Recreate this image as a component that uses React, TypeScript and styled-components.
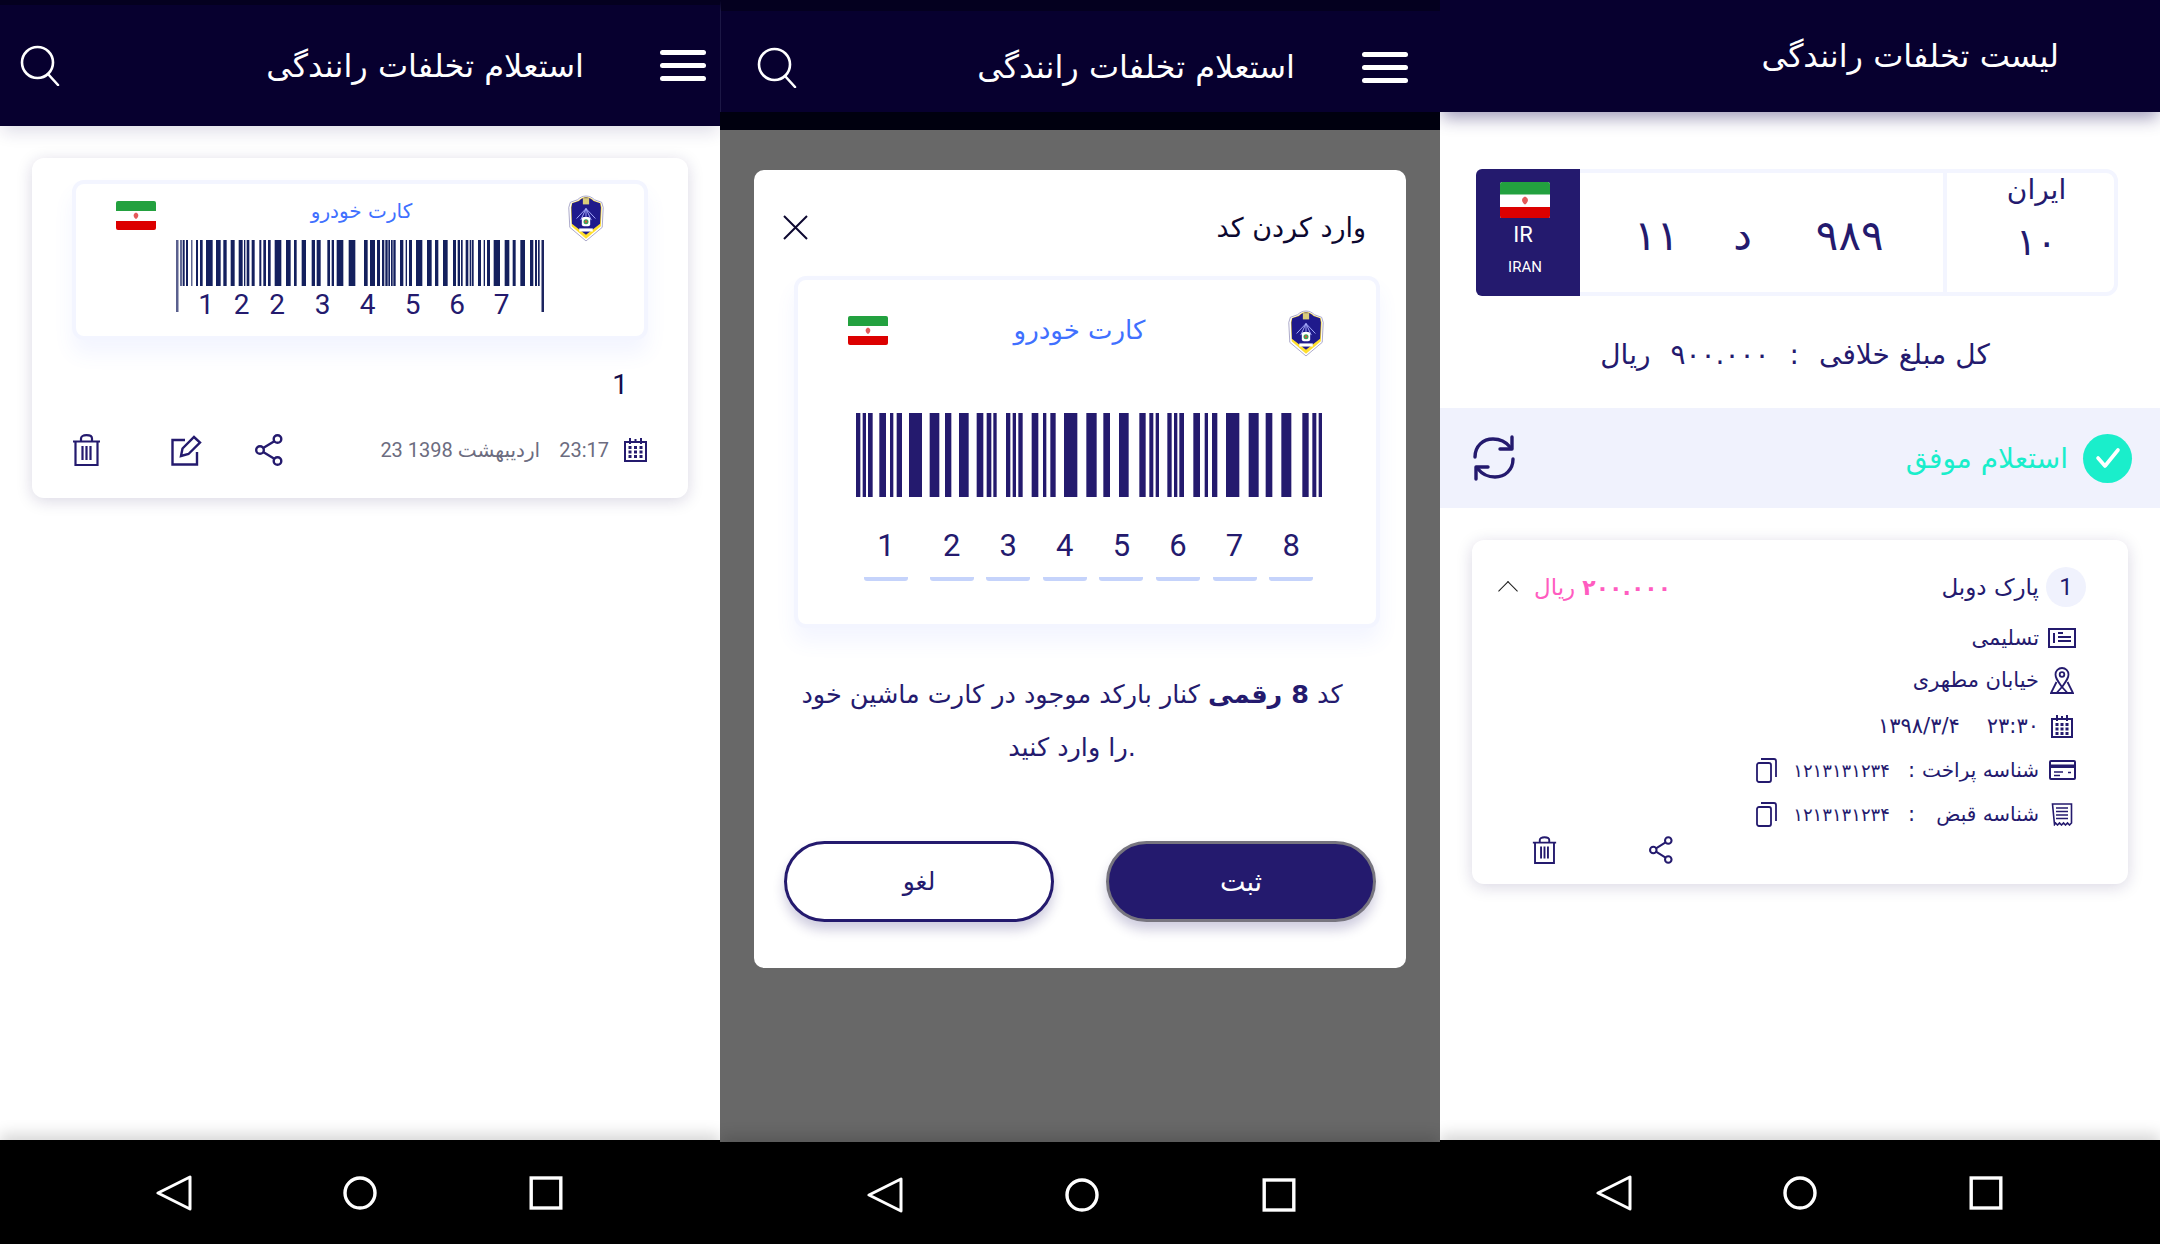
import React from 'react'
import styled, { createGlobalStyle } from 'styled-components'

const INDIGO = '#241a6e'
const NIGHT = '#07002f'
const ARABIC = '"DejaVu Sans", sans-serif'
const LATIN = 'Roboto, "DejaVu Sans", sans-serif'

const GlobalStyle = createGlobalStyle`
  html, body { margin: 0; padding: 0; background: #fff; }
  * { box-sizing: border-box; }
  body { font-family: ${ARABIC}; color: ${INDIGO}; }
`

const Page = styled.div`
  display: grid;
  grid-template-columns: repeat(3, 720px);
  width: 2160px;
  height: 1244px;
  overflow: hidden;
`

const Phone = styled.div`
  display: flex;
  flex-direction: column;
  height: 1244px;
  overflow: hidden;
`

const Drawing = styled.svg`
  flex: none;
  display: block;
`

/* ---------- app bar ---------- */

const Bar = styled.header<{ $height: number; $strip: number; $dim?: boolean; $shadow?: number }>`
  position: relative;
  z-index: 2;
  flex: none;
  display: flex;
  align-items: center;
  height: ${p => p.$height}px;
  padding: ${p => (p.$dim ? 11 : 0)}px ${p => (p.$dim ? 32 : 14)}px 0 ${p => (p.$dim ? 36 : 20)}px;
  background: ${NIGHT};
  border-top: ${p => p.$strip}px solid #04001f;
  box-shadow: ${p => (p.$shadow ? `0 8px 16px -2px rgba(30, 20, 90, ${p.$shadow})` : 'none')};
  ${p => p.$dim && 'border-left: 1px solid #1c1745;'}
`

const BarTitle = styled.h1<{ $right: number }>`
  margin: 0 ${p => p.$right}px 0 auto;
  font-family: ${ARABIC};
  font-size: 32px;
  font-weight: 400;
  color: #fff;
  direction: rtl;
  white-space: nowrap;
`

const Burger = styled.div`
  display: flex;
  flex-direction: column;
  gap: 8px;
  width: 46px;
`

const BurgerLine = styled.span`
  display: block;
  height: 5px;
  border-radius: 3px;
  background: #fff;
`

const DimStrip = styled.div`
  flex: none;
  height: 18px;
  background: #00000f;
  box-shadow: 0 6px 14px rgba(0, 0, 0, 0.12);
`

const SearchIcon = () => (
  <Drawing width="40" height="41" viewBox="0 0 40 41" fill="none" stroke="#fff" strokeWidth="2.6" strokeLinecap="round">
    <circle cx="17.5" cy="17.5" r="15.5" />
    <path d="M28 29l10 11" />
  </Drawing>
)

const MenuIcon = () => (
  <Burger>
    <BurgerLine />
    <BurgerLine />
    <BurgerLine />
  </Burger>
)

/* ---------- system nav ---------- */

const Nav = styled.nav<{ $height: number; $gap: number; $shift?: number; $drop: number }>`
  position: relative;
  z-index: 2;
  flex: none;
  display: flex;
  align-items: center;
  justify-content: center;
  gap: ${p => p.$gap}px;
  height: ${p => p.$height}px;
  padding: ${p => p.$drop}px 0 0 ${p => p.$shift ?? 0}px;
  background: #000;
  box-shadow: 0 -6px 14px rgba(0, 0, 0, 0.16);
`

const SystemNav: React.FC<{ height: number; gap: number; shift?: number; drop: number }> = ({ height, gap, shift, drop }) => (
  <Nav $height={height} $gap={gap} $shift={shift} $drop={drop}>
    <Drawing width="36" height="36" viewBox="0 0 36 36" fill="none" stroke="#fff" strokeWidth="3" strokeLinejoin="round">
      <path d="M34 2v32L2 18z" />
    </Drawing>
    <Drawing width="36" height="34" viewBox="0 0 36 34" fill="none" stroke="#fff" strokeWidth="3.4">
      <ellipse cx="18" cy="17" rx="15" ry="15" />
    </Drawing>
    <Drawing width="36" height="34" viewBox="0 0 36 34" fill="none" stroke="#fff" strokeWidth="3.4">
      <rect x="3.2" y="2" width="29.6" height="30" />
    </Drawing>
  </Nav>
)

/* ---------- drawn bits ---------- */

const Flag: React.FC<{ width: number }> = ({ width }) => (
  <Drawing width={width} height={width * 0.725} viewBox="0 0 40 29">
    <rect width="40" height="29" rx="2" fill="#fff" />
    <path d="M2 0h36a2 2 0 0 1 2 2v8H0V2a2 2 0 0 1 2-2z" fill="#23a13f" />
    <path d="M0 20h40v7a2 2 0 0 1-2 2H2a2 2 0 0 1-2-2z" fill="#dc0000" />
    <path d="M20 11.5c2.6 1 3.4 3.5.6 6.2h-1.2c-2.8-2.7-2-5.2.6-6.2z" fill="#e45a5a" />
  </Drawing>
)

const Emblem = () => (
  <Drawing width="38" height="47" viewBox="0 0 35 45">
    <path d="M17.5 1c3.5 0 6 1.5 8 3.5l7 2.5 1.500 5-1 19L17.500 44 2 31 1 12l1.500-5 7-2.500c2-2 4.500-3.500 8-3.500z" fill="#fff" stroke="#8d8bb8" strokeWidth="0.7" />
    <path d="M17.5 2c3.2 0 5.500 1.400 7.500 3.300l6.500 2.400 1 4.300-.8 18L17.500 42 3.800 30 3 12l1-4.300 6.500-2.400C12.500 3.400 14.300 2 17.500 2z" fill="#ffdf2e" />
    <path d="M17.5 2.500c3 0 5.200 1.300 7.200 3.200l6.300 2.300.8 4-.8 15.500-13.500 10.500L4 27.500 3.500 12l.8-4 6.500-2.300c2-1.900 4-3.200 6.700-3.200z" fill="#1f1a8c" />
    <rect x="14.5" y="3" width="6" height="6" fill="#d9cc7a" />
    <path d="M17.5 13l-9 9.500M17.500 13l-5 11M17.500 13v12M17.500 13l5 11M17.500 13l9 9.500" stroke="#aab0ff" strokeWidth="0.9" />
    <rect x="13.5" y="21" width="8" height="9" rx="2" fill="#fff" />
    <circle cx="17.5" cy="25.5" r="2.4" fill="#3aa35a" />
    <circle cx="17.5" cy="25.5" r="1.1" fill="#e4503c" />
    <rect x="11" y="32" width="13" height="3" fill="#fff" />
  </Drawing>
)

const Glyph: React.FC<{ w: number; h: number; children: React.ReactNode; stroke?: number }> = ({ w, h, children, stroke = 2 }) => (
  <Drawing width={w} height={h} viewBox={`0 0 ${w} ${h}`} fill="none" stroke={INDIGO} strokeWidth={stroke}>
    {children}
  </Drawing>
)

const TrashIcon: React.FC<{ small?: boolean }> = ({ small }) => (
  <Drawing width={small ? 25 : 29} height={small ? 28 : 32} viewBox="0 0 29 32" fill="none" stroke={INDIGO} strokeWidth="2.2">
    <path d="M1 7.5h27M9 7.5V4.500C9 2.500 11 1.200 14.500 1.200S20 2.500 20 4.500v3M3.500 7.500V31h22V7.500M10.500 12v14M14.500 12v14M18.500 12v14" />
  </Drawing>
)

const ShareIcon: React.FC<{ small?: boolean }> = ({ small }) => (
  <Drawing width={small ? 24 : 28} height={small ? 28 : 32} viewBox="0 0 28 32" fill="none" stroke={INDIGO} strokeWidth="2.4">
    <circle cx="22.5" cy="5" r="3.8" />
    <circle cx="5" cy="16" r="3.8" />
    <circle cx="22.5" cy="27" r="3.8" />
    <path d="M19.3 7.200 8.200 14M8.200 18l11.100 6.800" />
  </Drawing>
)

const EditIcon = () => (
  <Glyph w={31} h={32} stroke={2.4}>
    <path d="M14 6H1.500v24.500H26V18" />
    <path d="M10 22l1.500-7.500L23 3l6 5.500L17.500 20z" />
  </Glyph>
)

const CalendarIcon: React.FC<{ w?: number; h?: number }> = ({ w = 23, h = 24 }) => (
  <Glyph w={w} h={h}>
    <path d={`M1 4h${w - 2}v${h - 5}H1zM6 0v6M${w / 2} 1v4M${w - 6} 0v6`} />
    {[8, 12.5, 17].map(y =>
      [6, w / 2, w - 6].map(x => <rect key={`${x}-${y}`} x={x - 1.5} y={y} width="3" height="3" fill={INDIGO} stroke="none" />)
    )}
  </Glyph>
)

const CopyIcon = () => (
  <Glyph w={21} h={25} stroke={1.8}>
    <rect x="1" y="5" width="14" height="19" rx="2" />
    <path d="M5 1h13a2 2 0 0 1 2 2v16" />
  </Glyph>
)

const NoticeIcon = () => (
  <Glyph w={28} h={20}>
    <path d="M1 1h26v18H1z" />
    <path d="M6 5v10M10 5h5M10 9h13M10 13h13" />
  </Glyph>
)

const PinIcon = () => (
  <Glyph w={24} h={27} stroke={1.8}>
    <path d="M12 20C7 13 5.500 11 5.500 7.500a6.500 6.500 0 0 1 13 0C18.500 11 17 13 12 20z" />
    <circle cx="12" cy="7.5" r="2.3" />
    <path d="M6.500 15 1 26h22l-5.500-11M6.500 26 12 20l5.500 6" />
  </Glyph>
)

const PayIcon = () => (
  <Glyph w={27} h={20}>
    <rect x="1" y="1" width="25" height="18" rx="1" />
    <rect x="1" y="4.5" width="25" height="3.5" fill={INDIGO} stroke="none" />
    <path d="M5 12h9M5 15.500h6M19 12.500h3" strokeWidth="1.6" />
  </Glyph>
)

const ReceiptIcon = () => (
  <Glyph w={22} h={23} stroke={1.6}>
    <path d="M1.500 1h19v19l-2 2-2-2-2 2-2-2-2 2-2-2-2 2-2-2-1 1.500z" />
    <path d="M5 5h12M5 8.500h12M5 12h12M5 15.500h12" />
  </Glyph>
)

const RefreshIcon = () => (
  <Drawing width="44" height="46" viewBox="0 0 44 46" fill="none" stroke={INDIGO} strokeWidth="3.4" strokeLinecap="round" strokeLinejoin="round">
    <path d="M3 22C3 11 11 4 21 4c7 0 13 3 17 8" />
    <path d="M40 2v12H28" />
    <path d="M41 24c0 11-8 18-18 18-7 0-13-3-17-8" />
    <path d="M4 44V32h12" />
  </Drawing>
)

/* ---------- barcode ---------- */

type Span = [number, number]

// bar edges as read from the screenshot, at 3x, then moved to the barcode's origin
const place = (spans: Span[], offset: number): Span[] =>
  spans.map(([a, b]): Span => [a / 3 + offset, b / 3 + offset])

const BARS_SMALL: Span[] = [
  ...place([[361, 365], [368, 374], [378, 384], [394, 397], [408, 414], [420, 428], [438, 458], [468, 482], [490, 500], [512, 524], [536, 548], [552, 556], [560, 568], [575, 584], [598, 604], [610, 618], [624, 632], [644, 664], [678, 692], [702, 710], [725, 738], [755, 765], [770, 782], [802, 810], [815, 822], [830, 850], [866, 886]], -116),
  ...place([[42, 53], [60, 75], [81, 90], [96, 103], [106, 113], [115, 120], [123, 128], [130, 137], [150, 160], [167, 171], [177, 186], [198, 217], [231, 245], [255, 265], [279, 293], [309, 318], [323, 330], [333, 338], [347, 355], [359, 364], [366, 371], [384, 393], [401, 405], [411, 420], [431, 450], [464, 478], [488, 497], [511, 525], [540, 550], [555, 561], [564, 569]], 174),
]

const BARS_LARGE: Span[] = [
  ...place([[18, 31], [38, 48], [54, 68], [88, 108], [120, 130], [140, 156], [177, 216], [239, 268], [285, 304], [327, 356], [380, 400], [410, 424], [430, 440], [468, 481], [488, 498], [505, 518], [545, 565], [579, 589], [601, 617], [642, 682]], -6),
  ...place([[4, 35], [55, 75], [102, 131], [163, 182], [193, 205], [212, 222], [247, 260], [267, 277], [283, 297], [325, 345], [359, 369], [381, 397], [423, 463], [491, 521], [542, 562], [589, 619], [652, 671], [682, 694], [701, 711]], 229),
]

const SmallBarcode = () => (
  <Drawing width="368" height="72" viewBox="0 0 368 72">
    <rect x="0" y="0" width="2.5" height="72" fill="#5a608e" />
    <rect x="365.5" y="0" width="2.5" height="72" fill="#1c2560" />
    {BARS_SMALL.map(([a, b]) => (
      <rect key={a} x={a} y="0" width={b - a} height="46" fill="#14205e" />
    ))}
  </Drawing>
)

const LargeBarcode = () => (
  <Drawing width="466" height="84" viewBox="0 0 466 84">
    {BARS_LARGE.map(([a, b]) => (
      <rect key={a} x={a} y="0" width={b - a} height="84" fill={INDIGO} />
    ))}
  </Drawing>
)

/* ---------- vehicle card ---------- */

const Card = styled.section<{ $height: number; $top: number }>`
  flex: none;
  width: 656px;
  height: ${p => p.$height}px;
  margin: ${p => p.$top}px 0 0 32px;
  background: #fff;
  border-radius: 12px;
  box-shadow: 0 3px 16px rgba(30, 20, 90, 0.17);
`

const VehicleCard = styled.div<{ $width: number; $height: number; $left: number; $top: number }>`
  width: ${p => p.$width}px;
  height: ${p => p.$height}px;
  margin: ${p => p.$top}px 0 0 ${p => p.$left}px;
  background: #fff;
  border: 4px solid #f3f5ff;
  border-radius: 12px;
  box-shadow: 0 14px 20px rgba(90, 110, 255, 0.07);
`

const VehicleHead = styled.div<{ $pad: string; $tall: number }>`
  display: flex;
  justify-content: space-between;
  align-items: flex-start;
  height: ${p => p.$tall}px;
  padding: ${p => p.$pad};
`

const FlagSlot = styled.div`
  margin-top: 6px;
`

const VehicleName = styled.div<{ $size: number; $shift?: number; $top: number }>`
  margin: ${p => p.$top}px ${p => p.$shift ?? 0}px 0 0;
  font-size: ${p => p.$size}px;
  line-height: 28px;
  color: #4070ff;
  direction: rtl;
  white-space: nowrap;
`

const SmallCode = styled.div`
  width: 368px;
  margin: -1px 0 0 100px;
`

const SmallDigits = styled.div`
  display: flex;
  margin: -20px 0 0 12px;
  height: 20px;
`

const SmallDigit = styled.span<{ $width: number; $gap?: number }>`
  width: ${p => p.$width}px;
  margin-left: ${p => p.$gap ?? 0}px;
  text-align: center;
  font-family: ${LATIN};
  font-size: 28px;
  line-height: 26px;
  color: ${INDIGO};
`

const LargeCode = styled.div`
  margin: 58px 0 0 58px;
`

const CodeCells = styled.div`
  display: flex;
  gap: 12.6px;
  margin: 28px 0 0 66px;
`

const CodeCell = styled.div<{ $gapLeft?: boolean }>`
  width: 44px;
  height: 56px;
  margin-left: ${p => (p.$gapLeft ? 9 : 0)}px;
  border-bottom: 4px solid #c5d3fb;
  border-radius: 0 0 3px 3px;
  text-align: center;
  font-family: ${LATIN};
  font-size: 31px;
  line-height: 42px;
  color: ${INDIGO};
`

const SMALL_DIGITS: [string, number, number][] = [
  ['1', 36, 0], ['2', 35, 0], ['2', 36, 0], ['3', 45, 5], ['4', 45, 0], ['5', 45, 0], ['6', 44, 0], ['7', 45, 0],
]

/* ---------- screen 1 ---------- */

const WhiteBody = styled.main`
  flex: 1;
  display: flex;
  flex-direction: column;
  min-height: 0;
  background: #fff;
`

const CountLine = styled.div`
  margin: 31px 60px 0 0;
  text-align: right;
  font-family: ${LATIN};
  font-size: 28px;
  line-height: 28px;
  color: #130d4a;
`

const ActionRow = styled.div`
  display: flex;
  align-items: center;
  height: 32px;
  margin-top: 35px;
  padding: 0 41px 0 40px;
`

const TrashSlot = styled.div`
  margin-right: 70px;
`

const EditSlot = styled.div`
  margin-right: 53px;
`

const Stamp = styled.span`
  margin-left: auto;
  direction: rtl;
  font-family: ${LATIN};
  font-size: 20px;
  color: #6c6c80;
  white-space: nowrap;
`

const StampTime = styled.span`
  margin: 0 15px 0 19px;
  font-family: ${LATIN};
  font-size: 20px;
  color: #6c6c80;
`

/* ---------- screen 2 ---------- */

const DimBody = styled.main`
  flex: 1;
  min-height: 0;
  padding: 40px 34px 0;
  background: #686868;
`

const Modal = styled.section`
  width: 652px;
  height: 798px;
  background: #fff;
  border-radius: 10px;
  overflow: hidden;
`

const ModalHead = styled.div`
  display: flex;
  justify-content: space-between;
  align-items: center;
  height: 35px;
  margin-top: 40px;
  padding: 0 40px 0 29px;
`

const ModalTitle = styled.h2`
  margin: 0;
  font-family: ${ARABIC};
  font-size: 27px;
  font-weight: 400;
  color: #0c0830;
  direction: rtl;
`

const ModalText = styled.p`
  margin: 40px 16px 0 0;
  direction: rtl;
  text-align: center;
  font-size: 25.5px;
  line-height: 53px;
  color: ${INDIGO};
`

const ModalActions = styled.div`
  display: flex;
  justify-content: space-between;
  margin-top: 67px;
  padding: 0 30px;
`

const PillButton = styled.button<{ $primary?: boolean }>`
  width: 270px;
  height: 81px;
  border-radius: 41px;
  border: 3px solid ${p => (p.$primary ? '#77757f' : INDIGO)};
  background: ${p => (p.$primary ? INDIGO : '#fff')};
  color: ${p => (p.$primary ? '#fff' : INDIGO)};
  font-family: ${ARABIC};
  font-size: ${p => (p.$primary ? 27 : 25)}px;
  box-shadow: 0 8px 12px rgba(36, 26, 110, 0.22);
`

/* ---------- screen 3 ---------- */

const Plate = styled.div`
  display: flex;
  width: 642px;
  height: 127px;
  margin: 57px 0 0 36px;
`

const PlateTag = styled.div`
  flex: none;
  display: flex;
  flex-direction: column;
  align-items: center;
  width: 104px;
  padding: 13px 6px 0 0;
  background: ${INDIGO};
  border-radius: 6px 0 0 6px;
  color: #fff;
  font-family: ${LATIN};
`

const PlateIR = styled.span`
  margin: 3px 4px 0 0;
  font-size: 22px;
  line-height: 28px;
`

const PlateIran = styled.span`
  margin-top: 9px;
  font-size: 15px;
  line-height: 18px;
`

const PlateNumber = styled.div`
  flex: 1;
  display: flex;
  align-items: center;
  gap: 54px;
  padding: 6px 0 0 54px;
  border: solid #f3f5ff;
  border-width: 4px 0;
  font-size: 42px;
`

const PlateSerial = styled.span`
  margin-left: 10px;
`

const PlateRegion = styled.div`
  flex: none;
  display: flex;
  flex-direction: column;
  align-items: center;
  width: 175px;
  padding-left: 12px;
  border: 4px solid #f3f5ff;
  border-radius: 0 12px 12px 0;
`

const RegionName = styled.span`
  font-size: 28px;
  line-height: 34px;
`

const RegionCode = styled.span`
  margin-top: 13px;
  font-size: 38px;
  line-height: 44px;
`

const TotalLine = styled.div`
  display: flex;
  direction: rtl;
  align-items: center;
  justify-content: center;
  gap: 20px;
  height: 38px;
  margin-top: 39px;
  padding-right: 10px;
  font-size: 28px;
`

const StatusBand = styled.div`
  flex: none;
  display: flex;
  align-items: center;
  justify-content: space-between;
  height: 100px;
  margin-top: 35px;
  padding: 0 28px 0 32px;
  background: #f0f2fd;
`

const StatusOk = styled.div`
  display: flex;
  direction: rtl;
  align-items: center;
  gap: 15px;
  font-size: 28px;
  color: #1aeecb;
`

const CheckDisc = styled.span`
  display: flex;
  align-items: center;
  justify-content: center;
  width: 49px;
  height: 49px;
  border-radius: 50%;
  background: #1aeecb;
`

const ViolationHead = styled.div`
  display: flex;
  direction: rtl;
  align-items: center;
  justify-content: space-between;
  height: 40px;
  margin-top: 27px;
  padding: 0 42px 0 26px;
`

const HeadSide = styled.div`
  display: flex;
  align-items: center;
  gap: 7px;
`

const CountBadge = styled.span`
  width: 40px;
  height: 40px;
  border-radius: 50%;
  background: #f0f2fd;
  text-align: center;
  font-family: ${LATIN};
  font-size: 24px;
  line-height: 40px;
  color: ${INDIGO};
`

const ViolationName = styled.span`
  font-size: 23px;
  color: ${INDIGO};
`

const Amount = styled.span`
  display: flex;
  align-items: center;
  gap: 7px;
  font-size: 23px;
  color: #ff5cc0;
`

const AmountValue = styled.b`
  font-size: 22px;
  letter-spacing: -0.5px;
`

const Chevron = styled.span`
  display: block;
  width: 14px;
  height: 14px;
  margin: 8px 12px 0 3px;
  border-top: 1.5px solid #1b1b1b;
  border-left: 1.5px solid #1b1b1b;
  transform: rotate(45deg);
`

const DetailList = styled.div`
  margin-top: 9px;
`

const Detail = styled.div<{ $lift?: number }>`
  display: flex;
  direction: rtl;
  align-items: center;
  height: 44px;
  margin-top: ${p => -(p.$lift ?? 0)}px;
  margin-bottom: ${p => p.$lift ?? 0}px;
  padding-right: 51px;
  font-size: 21px;
  color: ${INDIGO};
`

const DetailIcon = styled.span`
  flex: none;
  display: flex;
  justify-content: center;
  width: 30px;
  margin-left: 8px;
`

const FieldLabel = styled.span`
  width: 116px;
  font-size: 20px;
  white-space: nowrap;
`

const Colon = styled.span`
  margin: 0 8px 0 18px;
`

const Digits = styled.span`
  margin-left: 16px;
  font-size: 18px;
  letter-spacing: -1px;
`

const DateDigits = styled.span<{ $gap?: number }>`
  margin-left: ${p => p.$gap ?? 0}px;
  font-size: 21px;
  letter-spacing: -0.7px;
`

const ViolationActions = styled.div`
  display: flex;
  align-items: center;
  gap: 92px;
  height: 30px;
  margin-top: -1px;
  padding-left: 60px;
`

const PAYMENT_ID = '۱۲۱۳۱۳۱۲۳۴'

export default function App() {
  return (
    <>
      <GlobalStyle />
      <Page>
        <Phone>
          <Bar $height={126} $strip={5} $shadow={0.14}>
            <SearchIcon />
            <BarTitle $right={76}>استعلام تخلفات رانندگی</BarTitle>
            <MenuIcon />
          </Bar>
          <WhiteBody>
            <Card $height={340} $top={32}>
              <VehicleCard $width={576} $height={160} $left={40} $top={22}>
                <VehicleHead $pad="11px 39px 0 40px" $tall={57}>
                  <FlagSlot><Flag width={40} /></FlagSlot>
                  <VehicleName $size={20} $top={2}>کارت خودرو</VehicleName>
                  <Emblem />
                </VehicleHead>
                <SmallCode>
                  <SmallBarcode />
                  <SmallDigits>
                    {SMALL_DIGITS.map(([d, w, gap], i) => (
                      <SmallDigit key={i} $width={w} $gap={gap}>{d}</SmallDigit>
                    ))}
                  </SmallDigits>
                </SmallCode>
              </VehicleCard>
              <CountLine>1</CountLine>
              <ActionRow>
                <TrashSlot><TrashIcon /></TrashSlot>
                <EditSlot><EditIcon /></EditSlot>
                <ShareIcon />
                <Stamp>اردیبهشت 1398 23</Stamp>
                <StampTime>23:17</StampTime>
                <CalendarIcon />
              </ActionRow>
            </Card>
          </WhiteBody>
          <SystemNav height={104} gap={150} drop={2} />
        </Phone>

        <Phone>
          <Bar $height={112} $strip={11} $dim>
            <SearchIcon />
            <BarTitle $right={67}>استعلام تخلفات رانندگی</BarTitle>
            <MenuIcon />
          </Bar>
          <DimStrip />
          <DimBody>
            <Modal>
              <ModalHead>
                <Drawing width="25" height="25" viewBox="0 0 25 25" stroke="#0c0830" strokeWidth="2">
                  <path d="M1 1l23 23M24 1 1 24" />
                </Drawing>
                <ModalTitle>وارد کردن کد</ModalTitle>
              </ModalHead>
              <VehicleCard $width={586} $height={352} $left={40} $top={31}>
                <VehicleHead $pad="30px 51px 0 50px" $tall={75}>
                  <FlagSlot><Flag width={40} /></FlagSlot>
                  <VehicleName $size={26} $shift={16} $top={6}>کارت خودرو</VehicleName>
                  <Emblem />
                </VehicleHead>
                <LargeCode><LargeBarcode /></LargeCode>
                <CodeCells>
                  {['1', '2', '3', '4', '5', '6', '7', '8'].map((d, i) => (
                    <CodeCell key={d} $gapLeft={i === 1}>{d}</CodeCell>
                  ))}
                </CodeCells>
              </VehicleCard>
              <ModalText>
                کد <b>8 رقمی</b> کنار بارکد موجود در کارت ماشین خود
                <br />
                .را وارد کنید
              </ModalText>
              <ModalActions>
                <PillButton>لغو</PillButton>
                <PillButton $primary>ثبت</PillButton>
              </ModalActions>
            </Modal>
          </DimBody>
          <SystemNav height={102} gap={161} shift={4} drop={4} />
        </Phone>

        <Phone>
          <Bar $height={112} $strip={0} $shadow={0.42}>
            <BarTitle $right={87}>لیست تخلفات رانندگی</BarTitle>
          </Bar>
          <WhiteBody>
            <Plate>
              <PlateTag>
                <Flag width={50} />
                <PlateIR>IR</PlateIR>
                <PlateIran>IRAN</PlateIran>
              </PlateTag>
              <PlateNumber>
                <span>۱۱</span>
                <span>د</span>
                <PlateSerial>۹۸۹</PlateSerial>
              </PlateNumber>
              <PlateRegion>
                <RegionName>ایران</RegionName>
                <RegionCode>۱۰</RegionCode>
              </PlateRegion>
            </Plate>
            <TotalLine>
              <span>کل مبلغ خلافی</span>
              <span>:</span>
              <span>۹۰۰.۰۰۰</span>
              <span>ریال</span>
            </TotalLine>
            <StatusBand>
              <RefreshIcon />
              <StatusOk>
                <CheckDisc>
                  <Drawing width="26" height="22" viewBox="0 0 26 22" fill="none" stroke="#fff" strokeWidth="3.6" strokeLinecap="round" strokeLinejoin="round">
                    <path d="M3 11l7 8L23 3" />
                  </Drawing>
                </CheckDisc>
                استعلام موفق
              </StatusOk>
            </StatusBand>
            <Card $height={344} $top={32}>
              <ViolationHead>
                <HeadSide>
                  <CountBadge>1</CountBadge>
                  <ViolationName>پارک دوبل</ViolationName>
                </HeadSide>
                <HeadSide>
                  <Amount>
                    <AmountValue>۲۰۰.۰۰۰</AmountValue>
                    ریال
                  </Amount>
                  <Chevron />
                </HeadSide>
              </ViolationHead>
              <DetailList>
                <Detail>
                  <DetailIcon><NoticeIcon /></DetailIcon>
                  تسلیمی
                </Detail>
                <Detail $lift={2}>
                  <DetailIcon><PinIcon /></DetailIcon>
                  خیابان مطهری
                </Detail>
                <Detail>
                  <DetailIcon><CalendarIcon w={22} h={23} /></DetailIcon>
                  <DateDigits $gap={27}>۲۳:۳۰</DateDigits>
                  <DateDigits>۱۳۹۸/۳/۴</DateDigits>
                </Detail>
                <Detail>
                  <DetailIcon><PayIcon /></DetailIcon>
                  <FieldLabel>شناسه پراخت</FieldLabel>
                  <Colon>:</Colon>
                  <Digits>{PAYMENT_ID}</Digits>
                  <CopyIcon />
                </Detail>
                <Detail>
                  <DetailIcon><ReceiptIcon /></DetailIcon>
                  <FieldLabel>شناسه قبض</FieldLabel>
                  <Colon>:</Colon>
                  <Digits>{PAYMENT_ID}</Digits>
                  <CopyIcon />
                </Detail>
              </DetailList>
              <ViolationActions>
                <TrashIcon small />
                <ShareIcon small />
              </ViolationActions>
            </Card>
          </WhiteBody>
          <SystemNav height={104} gap={150} drop={2} />
        </Phone>
      </Page>
    </>
  )
}
